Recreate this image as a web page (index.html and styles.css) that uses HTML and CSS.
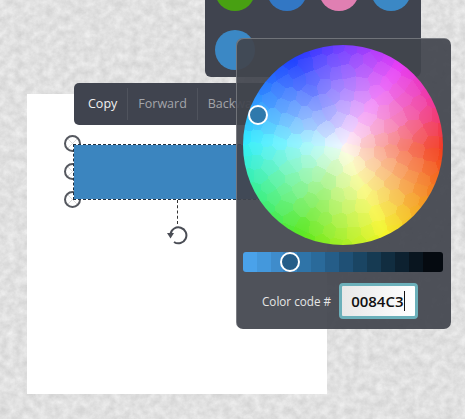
FILE: index.html
```html
<!DOCTYPE html>
<html lang="en">
<head>
    <meta charset="UTF-8">
    <title>Color picker</title>
    <link rel="stylesheet" href="styles.css">
</head>
<body>
    <div class="stage">
        <!-- paper texture -->
        <svg class="paper" width="465" height="419">
            <defs>
                <filter id="paper-noise" x="0" y="0" width="100%" height="100%" color-interpolation-filters="sRGB">
                    <feTurbulence type="fractalNoise" baseFrequency="0.13" numOctaves="5" seed="11"/>
                    <feColorMatrix type="matrix" values="0.14 0 0 0 0.81  0.14 0 0 0 0.81  0.14 0 0 0 0.81  0 0 0 0 1"/>
                </filter>
            </defs>
            <rect width="465" height="419" filter="url(#paper-noise)"/>
        </svg>

        <div class="canvas"></div>

        <span class="handle handle-top"></span>
        <span class="handle handle-mid"></span>
        <span class="handle handle-bot"></span>
        <div class="shape"></div>
        <div class="rotate-line"></div>
        <svg class="rotate-icon" width="22" height="22" viewBox="0 0 22 22">
            <path d="M4.5 10A8 8 0 1 1 8 18" fill="none" stroke="#4a4d55" stroke-width="2"/>
            <path d="M1 9h7l-3.5 5.5z" fill="#4a4d55"/>
        </svg>

        <div class="toolbar">
            <span class="tool tool-active">Copy</span>
            <span class="tool">Forward</span>
            <span class="tool">Backward</span>
        </div>

        <div class="swatches">
            <span class="swatch swatch-green"></span>
            <span class="swatch swatch-blue"></span>
            <span class="swatch swatch-pink"></span>
            <span class="swatch swatch-sky"></span>
            <span class="swatch swatch-sky"></span>
        </div>

        <div class="picker">
            <div class="wheel">
                <canvas id="wheel" width="200" height="200"></canvas>
                <span class="knob wheel-knob"></span>
            </div>
            <div class="shades">
                <span class="knob shade-knob"></span>
            </div>
            <div class="code-row">
                <label class="code-label">Color code #</label>
                <div class="code-input"><span class="code-text">0084C3</span></div>
            </div>
        </div>
    </div>
    <script src="wheel.js"></script>
</body>
</html>
```

FILE: styles.css
```css
body {
    margin: 0;
    font-family: "Open Sans", sans-serif;
}

.stage {
    position: relative;
    width: 465px;
    height: 419px;
    overflow: hidden;
    background: #dedede;
}

.paper {
    position: absolute;
    left: 0;
    top: 0;
}

.canvas {
    position: absolute;
    left: 27px;
    top: 94px;
    width: 300px;
    height: 300px;
    background: #fff;
}

/* selected rectangle */
.shape {
    position: absolute;
    left: 73px;
    top: 144px;
    width: 208px;
    height: 56px;
    box-sizing: border-box;
    background: #3b85bf;
    background-clip: padding-box;
    border: 1px dashed #1f2f40;
}

.handle {
    position: absolute;
    left: 64px;
    width: 13px;
    height: 13px;
    border: 2px solid #55585f;
    border-radius: 50%;
    background:
        linear-gradient(45deg, transparent 47%, #dcdcdc 47% 53%, transparent 53%),
        linear-gradient(-45deg, transparent 47%, #dcdcdc 47% 53%, transparent 53%),
        #fff;
}

.handle-top { top: 135px; }
.handle-mid { top: 163px; }
.handle-bot { top: 191px; }

.rotate-line {
    position: absolute;
    left: 177px;
    top: 200px;
    height: 24px;
    border-left: 1px dashed #333;
}

.rotate-icon {
    position: absolute;
    left: 166px;
    top: 224px;
}

.toolbar {
    position: absolute;
    left: 74px;
    top: 83px;
    display: flex;
    align-items: center;
    width: 210px;
    height: 42px;
    border-radius: 5px;
    background: #40444f;
    overflow: hidden;
}

.tool {
    padding: 0 10px;
    border-right: 1px solid #4f535d;
    font-size: 12.5px;
    line-height: 32px;
    color: #a3a5aa;
    white-space: nowrap;
}

.tool-active {
    padding-left: 14px;
    color: #f1f1f1;
}

/* saved colours */
.swatches {
    position: absolute;
    left: 205px;
    top: -33px;
    display: grid;
    grid-template-columns: repeat(4, 40px);
    gap: 12px;
    width: 216px;
    height: 110px;
    box-sizing: border-box;
    padding: 4px 0 0 10px;
    border-radius: 6px;
    background: #40444f;
}

.swatch {
    width: 40px;
    height: 40px;
    border-radius: 50%;
}

.swatch-green { background: #48a012; }
.swatch-blue { background: #3277c4; }
.swatch-pink { background: #e07fb2; }
.swatch-sky { background: #3b88c5; }

/* colour picker panel */
.picker {
    position: absolute;
    left: 236px;
    top: 38px;
    width: 215px;
    height: 291px;
    box-sizing: border-box;
    padding: 7px;
    border-radius: 7px;
    background: rgba(66, 69, 78, 0.93);
    box-shadow: inset 1px 1px 0 rgba(255, 255, 255, 0.25);
}

.wheel {
    position: relative;
    width: 200px;
    height: 200px;
}

.wheel canvas {
    display: block;
    border-radius: 50%;
}

.knob {
    position: absolute;
    width: 16px;
    height: 16px;
    border: 2px solid #fff;
    border-radius: 50%;
    background: #2f79ac;
}

.wheel-knob {
    left: 5px;
    top: 60px;
}

.shades {
    position: relative;
    width: 200px;
    height: 20px;
    margin-top: 7px;
    border-radius: 3px;
    background: linear-gradient(to right,
        #4aa2ea 0 7%, #4498dc 7% 14%, #3f8ccb 14% 20%, #3982bd 20% 27%,
        #2f74a8 27% 34%, #2a6a9a 34% 41%, #255d88 41% 48%, #1f5075 48% 55%,
        #1a4563 55% 62%, #163a52 62% 69%, #112d40 69% 76%, #0d2130 76% 83%,
        #09151f 83% 90%, #050a10 90% 100%);
}

.shade-knob {
    left: 37px;
    top: 0;
    background: #255d88;
}

.code-row {
    display: flex;
    align-items: center;
    gap: 8px;
    margin-top: 11px;
    padding-left: 19px;
}

.code-label {
    font-size: 11.7px;
    color: #e6e6e6;
}

.code-input {
    width: 79px;
    height: 36px;
    padding-left: 9px;
    box-sizing: border-box;
    border: 3px solid #6cb0ba;
    border-radius: 4px;
    background: linear-gradient(to right, #e8e8e8, #fff);
    font-size: 15px;
    font-weight: 600;
    line-height: 30px;
    color: #111;
}

.code-text {
    border-right: 1px solid #111;
}
```

FILE: wheel.js
```js
// mosaic colour wheel, nearest-seed cells on twisted rings
const ctx = document.getElementById('wheel').getContext('2d');
const img = ctx.createImageData(200, 200);

// hue anchors, clockwise from 12 o'clock
const stops = [
    [0, 118, 60, 255], [35, 230, 60, 245], [65, 240, 56, 150], [92, 242, 58, 28],
    [125, 245, 150, 34], [155, 245, 245, 40], [205, 90, 232, 30], [240, 60, 240, 140],
    [272, 50, 238, 255], [300, 44, 140, 255], [330, 30, 60, 255], [360, 118, 60, 255]
];

function colorAt(x, y) {
    const dx = x - 100, dy = y - 100;
    const r = Math.min(Math.hypot(dx, dy) / 100, 1);
    const deg = (Math.atan2(dx, -dy) * 180 / Math.PI + 360) % 360;
    let i = 0;
    while (stops[i + 1][0] < deg) i++;
    const a = stops[i], b = stops[i + 1];
    const t = (deg - a[0]) / (b[0] - a[0]);
    const sat = Math.pow(r, 0.85);
    return [1, 2, 3].map(c => {
        const v = a[c] + (b[c] - a[c]) * t;
        return 255 + (v - 255) * sat;
    });
}

// fixed pseudo random, so the cells stay the same on every load
let state = 17;
function jitter(size) {
    state = (state * 16807) % 2147483647;
    return (state / 2147483647 - 0.5) * size;
}

const seeds = [];
for (let ring = 1; ring <= 8; ring++) {
    const rad = ring * 12.5;
    const count = Math.round(ring * 6);
    const twist = ring * 0.42;
    for (let n = 0; n < count; n++) {
        const ang = twist + n / count * Math.PI * 2;
        const x = 100 + rad * Math.cos(ang) + jitter(6);
        const y = 100 + rad * Math.sin(ang) + jitter(6);
        seeds.push({ x, y, col: colorAt(x, y) });
    }
}

for (let y = 0; y < 200; y++) {
    for (let x = 0; x < 200; x++) {
        let best = seeds[0], dist = Infinity;
        for (const s of seeds) {
            const d = (s.x - x) ** 2 + (s.y - y) ** 2;
            if (d < dist) { dist = d; best = s; }
        }
        const own = colorAt(x, y);
        const p = (y * 200 + x) * 4;
        for (let c = 0; c < 3; c++) img.data[p + c] = best.col[c] * 0.55 + own[c] * 0.45;
        img.data[p + 3] = 255;
    }
}
ctx.putImageData(img, 0, 0);
```
